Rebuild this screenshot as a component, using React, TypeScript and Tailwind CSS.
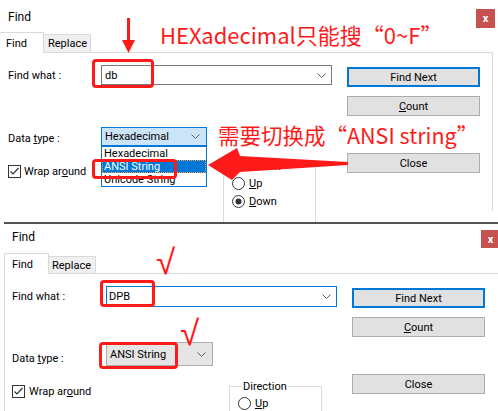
import React from 'react'

type Variant = 'top' | 'bottom'

function Chevron() {
  return (
    <svg width="9" height="5" viewBox="0 0 9 5" className="shrink-0">
      <path d="M0.5 0.5L4.5 4.5L8.5 0.5" fill="none" stroke="#5f5f5f" />
    </svg>
  )
}

function CheckBox() {
  return (
    <svg width="13" height="13" viewBox="0 0 13 13" className="shrink-0">
      <rect x="0.5" y="0.5" width="12" height="12" fill="#fff" stroke="#333" />
      <path d="M2.5 6.5L5 9L10.5 3" fill="none" stroke="#333" strokeWidth="1.2" />
    </svg>
  )
}

function Radio({ on }: { on?: boolean }) {
  return (
    <svg width="13" height="13" viewBox="0 0 13 13" className="shrink-0">
      <circle cx="6.5" cy="6.5" r="6" fill="#fff" stroke="#333" />
      {on && <circle cx="6.5" cy="6.5" r="3" fill="#333" />}
    </svg>
  )
}

function Button({ children, focused }: { children: React.ReactNode; focused?: boolean }) {
  return (
    <div
      className={
        focused
          ? 'flex h-[20px] w-[133px] items-center justify-center border-2 border-[#0078d7] bg-[#e1e1e1]'
          : 'flex h-[20px] w-[133px] items-center justify-center border border-[#adadad] bg-[#e1e1e1]'
      }
    >
      {children}
    </div>
  )
}

function FindDialog({ variant }: { variant: Variant }) {
  const top = variant === 'top'

  return (
    <div className={top ? 'h-[222px] overflow-hidden' : 'ml-[4px] h-[189px] overflow-hidden border-t-2 border-[#555]'}>
      {/* title bar */}
      <div className={top ? 'flex h-[32px] items-start justify-between' : 'flex h-[29px] items-start justify-between'}>
        <span className={top ? 'pl-[8px] pt-[9px] text-[12px] leading-[16px]' : 'pl-[8px] pt-[5px] text-[12px] leading-[16px]'}>
          Find
        </span>
        <div
          className={
            top
              ? 'mr-[3px] mt-[9px] flex h-[19px] w-[19px] items-center justify-center bg-[#c75050] text-[11px] font-bold text-white'
              : 'mt-[6px] flex h-[18px] w-[17px] items-center justify-center bg-[#c75050] pl-[2px] text-[11px] font-bold text-white'
          }
        >
          x
        </div>
      </div>

      {/* tabs */}
      <div className="flex h-[20px] items-start">
        <div
          className={
            top
              ? 'relative z-10 flex h-[21px] w-[44px] items-center border-t border-r border-[#d9d9d9] bg-white pl-[6px]'
              : 'relative z-10 flex h-[21px] w-[45px] items-center border-t border-r border-l border-[#d9d9d9] bg-white pl-[7px]'
          }
        >
          Find
        </div>
        <div
          className={
            top
              ? 'mt-[2px] flex h-[18px] w-[47px] items-center border-t border-r border-[#d9d9d9] bg-[#f0f0f0] pl-[4px]'
              : 'mt-[3px] flex h-[17px] w-[47px] items-center border-t border-r border-[#d9d9d9] bg-[#f0f0f0] pl-[3px]'
          }
        >
          Replace
        </div>
      </div>

      {/* panel */}
      <div className={top ? 'flex h-[159px] w-[493px] border-t border-r border-[#d9d9d9]' : 'flex h-[140px] border-t border-l border-[#d9d9d9]'}>
        <div className={top ? 'w-[347px] shrink-0 pl-[8px] pt-[12px]' : 'w-[347px] shrink-0 pl-[7px] pt-[12px]'}>
          <div className="flex h-[20px] items-center">
            <span className={top ? 'w-[93px]' : 'w-[94px]'}>Find what :</span>
            <div
              className={
                top
                  ? 'flex h-[20px] w-[231px] items-center justify-between border border-[#7a7a7a] pl-[3px] pr-[5px]'
                  : 'flex h-[21px] w-[231px] items-center justify-between border border-[#0078d7] pl-[2px] pr-[5px]'
              }
            >
              <span>{top ? 'db' : 'DPB'}</span>
              <Chevron />
            </div>
          </div>

          <div className={top ? 'mt-[42px] flex h-[19px] items-center' : 'mt-[36px] flex h-[24px] items-center'}>
            <span className={top ? 'w-[93px] pt-[3px]' : 'w-[94px] pt-[8px]'}>
              Data <span className="underline">t</span>ype :
            </span>
            {top ? (
              <div className="relative flex h-[19px] w-[106px] items-center justify-between border border-[#0078d7] bg-[#cce4f7] pl-[3px] pr-[6px]">
                <span>Hexadecimal</span>
                <Chevron />
                <div className="absolute left-[-1px] top-[18px] z-20 w-[106px] border border-[#0078d7] bg-white">
                  <div className="h-[13px] pl-[2px]">Hexadecimal</div>
                  <div className="h-[13px] border border-dotted border-[#f5a050] bg-[#0078d7] pl-[1px] leading-[11px] text-white">ANSI String</div>
                  <div className="h-[13px] pl-[2px]">Unicode String</div>
                </div>
              </div>
            ) : (
              <div className="flex h-[24px] w-[107px] items-center justify-between border border-[#adadad] bg-[#e5e5e5] pl-[3px] pr-[6px]">
                <span>ANSI String</span>
                <Chevron />
              </div>
            )}
          </div>

          <div className={top ? 'mt-[19px] flex items-start' : 'mt-[19px] flex items-start'}>
            <div className={top ? 'flex w-[215px] items-center gap-[3px]' : 'flex w-[217px] items-center gap-[4px]'}>
              <CheckBox />
              <span>
                Wrap ar<span className="underline">o</span>und
              </span>
            </div>
            <fieldset className="-mt-[5px] h-[70px] w-[93px] border border-[#dcdcdc] pl-[8px]">
              <legend className="ml-[4px] px-[1px] leading-[13px]">Direction</legend>
              <div className="mt-[4px] flex items-center gap-[4px]">
                <Radio />
                <span>
                  <span className="underline">U</span>p
                </span>
              </div>
              <div className="mt-[5px] flex items-center gap-[4px]">
                <Radio on />
                <span>
                  <span className="underline">D</span>own
                </span>
              </div>
            </fieldset>
          </div>
        </div>

        <div className="flex flex-col pt-[14px]">
          <Button focused>Find Next</Button>
          <div className="mt-[9px]">
            <Button>
              <span className="underline">C</span>ount
            </Button>
          </div>
          <div className="mt-[37px]">
            <Button>Close</Button>
          </div>
        </div>
      </div>
    </div>
  )
}

function Annotations() {
  return (
    <div className="pointer-events-none absolute inset-0 z-30 font-['Noto_Sans_CJK_SC',sans-serif] text-[#ff1a1a]">
      <svg width="498" height="411" viewBox="0 0 498 411" className="absolute left-0 top-0">
        <rect x="127" y="18" width="3" height="24" fill="#ff1a1a" />
        <polygon points="122,40 135,40 128.5,53" fill="#ff1a1a" />
        <polygon points="208,165 237,148 240,156 348,162 348,165 240,172 232,180" fill="#ff1a1a" />
      </svg>

      <div className="absolute left-[92px] top-[59px] h-[29px] w-[62px] rounded-[4px] border-[3px] border-[#ff1a1a]" />
      <div className="absolute left-[92px] top-[159px] h-[20px] w-[85px] rounded-[4px] border-[3px] border-[#ff1a1a]" />
      <div className="absolute left-[100px] top-[280px] h-[27px] w-[55px] rounded-[4px] border-[3px] border-[#ff1a1a]" />
      <div className="absolute left-[99px] top-[342px] h-[27px] w-[79px] rounded-[4px] border-[3px] border-[#ff1a1a]" />

      <div className="absolute left-[160px] top-[23px] whitespace-nowrap text-[22px] leading-[22px]">HEXadecimal只能搜“0~F”</div>
      <div className="absolute left-[218px] top-[124px] whitespace-nowrap text-[21.5px] leading-[22px]">需要切换成“ANSI string”</div>

      <div className="absolute left-[156px] top-[244px] font-['Liberation_Sans',sans-serif] text-[35px] leading-[35px]">√</div>
      <div className="absolute left-[180px] top-[315px] font-['Liberation_Sans',sans-serif] text-[35px] leading-[35px]">√</div>
    </div>
  )
}

export default function App() {
  return (
    <div className="relative h-[411px] w-[498px] overflow-hidden bg-white font-['Roboto',sans-serif] text-[11px] leading-[13px] text-black">
      <FindDialog variant="top" />
      <FindDialog variant="bottom" />
      <Annotations />
    </div>
  )
}
